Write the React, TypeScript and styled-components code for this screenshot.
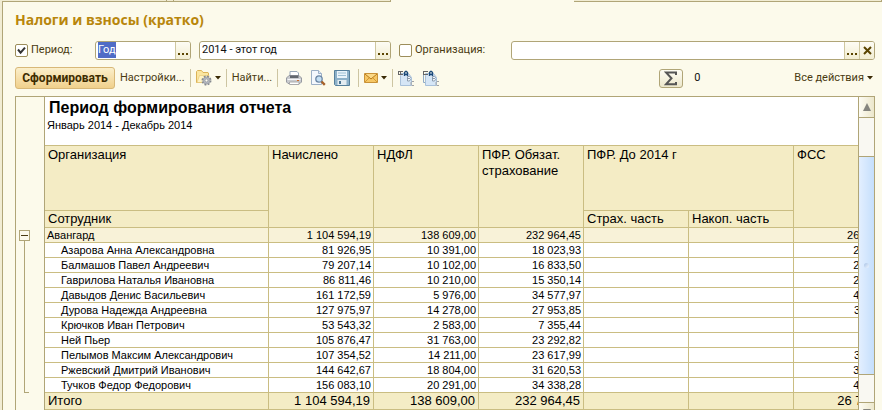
import React from "react";
import styled, { createGlobalStyle } from "styled-components";

const line = "#b0a577";
const grid = "#cabd82";
const ink = "#4a3a12";
const uiFont = `Roboto, "Liberation Sans", sans-serif`;
const sheetFont = `"Liberation Sans", Arial, sans-serif`;

const GlobalStyle = createGlobalStyle`
  * { box-sizing: border-box; }
  html, body { margin: 0; height: 100%; overflow: hidden; background: #fcfaeb; }
  button, input { font: inherit; color: inherit; margin: 0; padding: 0; }
`;

const TabEdge = styled.div`
  display: flex;
  height: 2px;
  background: #fcfaeb;
`;

const TabEdgePart = styled.div<{ $size: number; $open?: boolean }>`
  flex: ${(p) => p.$size} 1 0;
  background: ${(p) => (p.$open ? "#fcfaeb" : "#f1ecd3")};
  border-bottom: ${(p) => (p.$open ? "none" : `1px solid ${line}`)};
  border-right: ${(p) => (p.$open ? "none" : `1px solid ${line}`)};
`;

const Window = styled.main`
  min-height: 100vh;
  background: #fcfaeb;
  color: ${ink};
  font: 11px/16px ${uiFont};
  border-left: 2px solid #f1ecd3;
`;

const Body = styled.div`
  border-left: 1px solid ${line};
  padding: 9px 7px 0 12px;
`;

const Title = styled.h1`
  margin: 0 0 11px;
  color: #b8860b;
  font: bold 14px/18px "Open Sans", "Noto Sans", sans-serif;
`;

const Filters = styled.div`
  display: flex;
  align-items: center;
  height: 20px;
`;

const Check = styled.label<{ $width: number }>`
  display: flex;
  align-items: center;
  gap: 3px;
  flex: none;
  width: ${(p) => p.$width}px;
`;

const CheckBox = styled.input`
  appearance: none;
  width: 13px;
  height: 13px;
  margin: 0;
  border: 1px solid #9c8d5a;
  border-radius: 2px;
  background: #fff;
  &:checked {
    background: #fff
      url("data:image/svg+xml,%3Csvg xmlns='http://www.w3.org/2000/svg' viewBox='0 0 11 11'%3E%3Cpath d='M2 4.5 4.6 7.6 9 2.6' fill='none' stroke='%23333' stroke-width='2'/%3E%3C/svg%3E");
  }
`;

const Field = styled.div<{ $width?: number }>`
  display: flex;
  flex: ${(p) => (p.$width ? `0 0 ${p.$width}px` : "1 1 0")};
  min-width: 0;
  height: 19px;
  margin-right: 8px;
  border: 1px solid ${line};
  border-radius: 3px;
  background: #fff;
  overflow: hidden;
  color: #111;
  &:last-child { margin-right: 0; }
`;

const FieldInput = styled.input`
  flex: 1;
  min-width: 0;
  border: 0;
  outline: 0;
  padding-left: 2px;
  background: transparent;
  &::selection { background: #4f6bc6; color: #fff; }
`;

const FieldButton = styled.button`
  display: flex;
  align-items: center;
  justify-content: center;
  width: 15px;
  border: 0;
  border-left: 1px solid #cfc79f;
  background: linear-gradient(#fdfcf4, #f2edd2);
  color: #5a4400;
`;

const Toolbar = styled.div`
  display: flex;
  align-items: center;
  height: 22px;
  margin: 7px 0;
`;

const Primary = styled.button`
  height: 22px;
  width: 100px;
  border: 1px solid #d8b878;
  border-radius: 3px;
  background: linear-gradient(#fbefcb, #f0d08c);
  color: #3d2c00;
  font-weight: bold;
  font-size: 12px;
`;

const Tool = styled.button`
  display: flex;
  align-items: center;
  gap: 3px;
  border: 0;
  background: none;
  white-space: nowrap;
`;

const ToolGroup = styled.div<{ $wide?: boolean }>`
  display: flex;
  gap: 8px;
  padding: 0 ${(p) => (p.$wide ? 8 : 5)}px;
  border-right: 1px solid #cdc5a2;
  height: 18px;
  &:last-of-type { border: 0; }
`;

const Total = styled.output`
  width: 98px;
  margin-left: 11px;
  color: #111;
`;

const SumButton = styled.button`
  display: flex;
  align-items: center;
  justify-content: center;
  width: 24px;
  height: 19px;
  margin-left: auto;
  border: 1px solid ${line};
  border-radius: 3px;
  background: linear-gradient(#fdfcf4, #ece7cb);
`;

const ActionsButton = styled(Tool)`
  padding: 0 2px;
`;

const Report = styled.section`
  display: flex;
  border: 1px solid ${line};
  color: #000;
  font-family: ${sheetFont};
`;

const Gutter = styled.div`
  display: flex;
  flex-direction: column;
  align-items: center;
  flex: none;
  width: 29px;
  padding: 133px 11px 0 0;
  border-right: 1px solid ${line};
`;

const Toggle = styled.button`
  display: flex;
  align-items: center;
  justify-content: center;
  width: 11px;
  height: 11px;
  border: 1px solid ${line};
  background: #fcfaeb;
`;

const Bracket = styled.div`
  width: 5px;
  height: 152px;
  margin-left: 4px;
  border-left: 1px solid ${line};
  border-bottom: 1px solid ${line};
`;

const Sheet = styled.div`
  flex: 1;
  min-width: 0;
  overflow: hidden;
  padding-bottom: 13px;
  background: #fff;
`;

const SheetHead = styled.header`
  height: 48px;
  padding: 1px 2px 0;
`;

const SheetTitle = styled.h2`
  margin: 0;
  padding-left: 2px;
  font-size: 16px;
  line-height: 20px;
`;

const SheetPeriod = styled.p`
  margin: 0;
  font-size: 11px;
  line-height: 14px;
`;

const Table = styled.table`
  table-layout: fixed;
  width: 854px;
  border-collapse: separate;
  border-spacing: 0;
  border-top: 1px solid ${grid};
`;

const Col = styled.col<{ $width: number }>`
  width: ${(p) => p.$width}px;
`;

const HeadCell = styled.th<{ $tall?: boolean }>`
  height: ${(p) => (p.$tall ? 65 : 17)}px;
  padding: ${(p) => (p.$tall ? "1px 3px 0" : "0 3px")};
  border-right: 1px solid ${grid};
  border-bottom: 1px solid ${grid};
  background: #f4ecc5;
  font-size: 13px;
  line-height: 16px;
  font-weight: normal;
  text-align: left;
  vertical-align: top;
`;

type Kind = "group" | "item" | "total";

const Row = styled.tr<{ $kind: Kind }>`
  background: ${(p) => ({ group: "#f8f2d8", item: "#fff", total: "#f4ecc5" })[p.$kind]};
  font-size: ${(p) => (p.$kind === "total" ? 13 : 11)}px;
  line-height: ${(p) => (p.$kind === "total" ? 16 : 14)}px;
  & > * {
    padding: 0 ${(p) => (p.$kind === "total" ? 3 : 2)}px;
    border-right: 1px solid ${grid};
    border-bottom: 1px solid ${grid};
    white-space: nowrap;
  }
  & > th {
    font-weight: normal;
    text-align: left;
    padding-left: ${(p) => ({ group: 2, item: 16, total: 3 })[p.$kind]}px;
  }
  & > td { text-align: right; }
`;

const Scroll = styled.div`
  display: flex;
  flex-direction: column;
  flex: none;
  width: 16px;
  border-left: 1px solid ${line};
  background: #f9f8f2;
`;

const ScrollButton = styled.button<{ $end?: boolean }>`
  display: flex;
  align-items: center;
  justify-content: center;
  height: 21px;
  border: 0;
  border-top: ${(p) => (p.$end ? `1px solid ${line}` : "none")};
  border-bottom: ${(p) => (p.$end ? "none" : `1px solid ${line}`)};
  background: linear-gradient(90deg, #fdfcf4, #ece7cb);
`;

const Space = styled.div<{ $size: number }>`
  flex: ${(p) => p.$size} 1 0;
`;

const Thumb = styled.div`
  display: flex;
  align-items: center;
  justify-content: center;
  flex: 220 1 0;
  border: solid ${line};
  border-width: 1px 0;
  background: linear-gradient(90deg, #e3efff, #c5dffc);
`;

const Grip = styled.span`
  width: 5px;
  height: 5px;
  border-radius: 50%;
  background: linear-gradient(135deg, #a9c3e6, #eef6ff);
`;

const Dots = () => (
  <svg width="10" height="12" aria-hidden="true">
    <path d="M0 9h2v2H0zM4 9h2v2H4zM8 9h2v2H8z" fill="#5a4400" />
  </svg>
);

const Caret = () => (
  <svg width="6" height="4" aria-hidden="true">
    <path d="M0 0h6L3 3.500z" fill="#3a2a05" />
  </svg>
);

const FolderIcon = () => (
  <svg width="16" height="16" viewBox="0 0 16 16" aria-hidden="true">
    <path d="M.5 12.500v-11l1-1h4l1.500 2h5l.5.5v9.500z" fill="#fbe6a0" stroke="#dcb358" />
    <path d="M1 12.500 3.500 5.500h9.500v7z" fill="#fff3c4" stroke="#e6c571" strokeWidth=".6" />
    <circle cx="10.500" cy="10.500" r="4" fill="none" stroke="#85898f" strokeWidth="2" strokeDasharray="1.800 1.340" />
    <circle cx="10.500" cy="10.500" r="3.500" fill="#b4b8c0" stroke="#8d9198" strokeWidth=".6" />
    <circle cx="10.500" cy="10.500" r="1.400" fill="#fffdf2" stroke="#85898f" strokeWidth=".6" />
  </svg>
);

const PrinterIcon = () => (
  <svg width="16" height="16" viewBox="0 0 16 16" aria-hidden="true">
    <path d="M4 6V1.500h7L12.500 3v3z" fill="#fff" stroke="#9aa9b8" />
    <path d="M.5 8 3 5.500h10L15.500 8v4L14 13.500H2L.5 12z" fill="#c9cbcf" stroke="#9699a0" />
    <path d="M4 5.500h8.500v2.500H4z" fill="#62676e" />
    <path d="M1.500 9.500h13" stroke="#f6f6f8" />
    <path d="M3.500 12h9.500v2.500H3.500z" fill="#fff" stroke="#aaa" />
    <path d="M11 10.500h2" stroke="#d26a25" />
  </svg>
);

const PreviewIcon = () => (
  <svg width="16" height="16" viewBox="0 0 16 16" aria-hidden="true">
    <path d="M1.500.5h7l3 3v11h-10z" fill="#f4f8fd" stroke="#9db0c6" />
    <path d="M8.500.5v3h3" fill="#dce8f5" stroke="#9db0c6" />
    <circle cx="9" cy="9" r="3.200" fill="#c5e0f4" stroke="#6c87a5" strokeWidth="1.300" />
    <path d="m11.500 11.500 3.300 3.300" stroke="#a5612a" strokeWidth="2.400" />
  </svg>
);

const SaveIcon = () => (
  <svg width="16" height="16" viewBox="0 0 16 16" aria-hidden="true">
    <path d="M.5.5h15v15h-14l-1-1z" fill="#8db1c9" stroke="#56809c" />
    <path d="M3 1h10v7H3z" fill="#eaf4fa" />
    <path d="M4 3h8M4 5.500h8" stroke="#9fc0d4" />
    <path d="M3.500 10h9v5h-9z" fill="#e3ecf1" />
    <path d="M5 11h2v3H5z" fill="#4b7592" />
  </svg>
);

const MailIcon = () => (
  <svg width="14" height="16" viewBox="0 0 14 16" aria-hidden="true">
    <path d="M.5 3.500h13v9H.5z" fill="#f6c765" stroke="#c99238" />
    <path d="m1 12 4.500-4.500M13 12 8.500 7.500" stroke="#d39a35" />
    <path d="m1 4 6 5 6-5" fill="#fbd987" stroke="#b87a18" />
  </svg>
);

const SheetIcon = ({ stacked }: { stacked?: boolean }) => (
  <svg width="17" height="16" viewBox="0 0 17 16" aria-hidden="true">
    {stacked && <path d="M.5 4v8.500h2" fill="none" stroke="#8faac6" />}
    <path d="M2.500 5.500V3.500h8l3 4v8h-11z" fill="#d6e6f6" stroke="#a9c1da" />
    <path d={stacked ? "M0 1.500h5M0 4.500h5M.5 1v4" : "M0 1.500h5M0 4.500h5M.5 1v4M2.500 1v4"} stroke="#666" />
    <path d="M6.500 6V2.500l1-1h1l1 1V6M6.500 4.500h3" fill="none" stroke="#1c4a78" strokeWidth="1.300" />
    <path d="M9.500 6.500h2l1 1-1 1h-2h2l1 1-1 1.500h-2z" fill="#f2f7fc" stroke="#8494a5" strokeWidth=".9" />
    <path d="M16 11.500h-2l-1 1v2l1 1h2" fill="none" stroke="#a3a3a3" />
  </svg>
);

const SumIcon = () => (
  <svg width="14" height="15" viewBox="0 0 14 15" aria-hidden="true">
    <path d="M12 4V1.500H2L7.500 7.200 2 13.200h10V11" fill="none" stroke="#555" strokeWidth="2" />
  </svg>
);

const rows: { name: string; kind: Kind; values: string[] }[] = [
  { name: "Авангард", kind: "group", values: ["1 104 594,19", "138 609,00", "232 964,45", "26 703,84"] },
  { name: "Азарова Анна Александровна", kind: "item", values: ["81 926,95", "10 391,00", "18 023,93", "2 375,88"] },
  { name: "Балмашов Павел Андреевич", kind: "item", values: ["79 207,14", "10 102,00", "16 833,50", "2 297,01"] },
  { name: "Гаврилова Наталья Ивановна", kind: "item", values: ["86 811,46", "10 210,00", "15 350,14", "2 517,53"] },
  { name: "Давыдов Денис Васильевич", kind: "item", values: ["161 172,59", "5 976,00", "34 577,97", "4 674,01"] },
  { name: "Дурова Надежда Андреевна", kind: "item", values: ["127 975,97", "14 278,00", "27 953,85", "3 711,30"] },
  { name: "Крючков Иван Петрович", kind: "item", values: ["53 543,32", "2 583,00", "7 355,44", ""] },
  { name: "Ней Пьер", kind: "item", values: ["105 876,47", "31 763,00", "23 292,82", ""] },
  { name: "Пелымов Максим Александрович", kind: "item", values: ["107 354,52", "14 211,00", "23 617,99", "3 113,28"] },
  { name: "Ржевский Дмитрий Иванович", kind: "item", values: ["144 642,67", "18 804,00", "31 620,53", "3 488,60"] },
  { name: "Тучков Федор Федорович", kind: "item", values: ["156 083,10", "20 291,00", "34 338,28", "4 526,23"] },
  { name: "Итого", kind: "total", values: ["1 104 594,19", "138 609,00", "232 964,45", "26 703,84"] },
];

export default function App() {
  const period = React.useRef<HTMLInputElement>(null);
  React.useEffect(() => {
    period.current?.focus();
    period.current?.select();
  }, []);

  return (
    <>
      <GlobalStyle />
      <Window>
        <TabEdge>
          <TabEdgePart $size={165} />
          <TabEdgePart $size={6} />
          <TabEdgePart $size={217} />
          <TabEdgePart $size={184} $open />
          <TabEdgePart $size={308} />
        </TabEdge>
        <Body>
          <Title>Налоги и взносы (кратко)</Title>
          <Filters>
            <Check $width={80}>
              <CheckBox type="checkbox" defaultChecked />
              Период:
            </Check>
            <Field $width={96}>
              <FieldInput ref={period} aria-label="Вид периода" defaultValue="Год" />
              <FieldButton aria-label="Выбрать"><Dots /></FieldButton>
            </Field>
            <Field $width={192}>
              <FieldInput aria-label="Период" defaultValue="2014 - этот год" />
              <FieldButton aria-label="Выбрать"><Dots /></FieldButton>
            </Field>
            <Check $width={112}>
              <CheckBox type="checkbox" />
              Организация:
            </Check>
            <Field>
              <FieldInput aria-label="Организация" />
              <FieldButton aria-label="Выбрать"><Dots /></FieldButton>
              <FieldButton aria-label="Очистить">
                <svg width="9" height="9" aria-hidden="true">
                  <path d="m1 1 7 7M8 1 1 8" stroke="#5a4400" strokeWidth="2" />
                </svg>
              </FieldButton>
            </Field>
          </Filters>
          <Toolbar>
            <Primary>Сформировать</Primary>
            <ToolGroup>
              <Tool>Настройки...</Tool>
            </ToolGroup>
            <ToolGroup>
              <Tool aria-label="Варианты"><FolderIcon /><Caret /></Tool>
            </ToolGroup>
            <ToolGroup>
              <Tool>Найти...</Tool>
            </ToolGroup>
            <ToolGroup $wide>
              <Tool aria-label="Печать"><PrinterIcon /></Tool>
              <Tool aria-label="Просмотр"><PreviewIcon /></Tool>
              <Tool aria-label="Сохранить"><SaveIcon /></Tool>
            </ToolGroup>
            <ToolGroup>
              <Tool aria-label="Отправить"><MailIcon /><Caret /></Tool>
            </ToolGroup>
            <ToolGroup>
              <Tool aria-label="Развернуть группы"><SheetIcon /></Tool>
              <Tool aria-label="Свернуть группы"><SheetIcon stacked /></Tool>
            </ToolGroup>
            <SumButton aria-label="Сумма"><SumIcon /></SumButton>
            <Total>0</Total>
            <ActionsButton>Все действия <Caret /></ActionsButton>
          </Toolbar>
          <Report>
            <Gutter>
              <Toggle aria-label="Свернуть">
                <svg width="7" height="1" aria-hidden="true"><path d="M0 0h7v1H0z" fill="#4a3a12" /></svg>
              </Toggle>
              <Bracket />
            </Gutter>
            <Sheet>
              <SheetHead>
                <SheetTitle>Период формирования отчета</SheetTitle>
                <SheetPeriod>Январь 2014 - Декабрь 2014</SheetPeriod>
              </SheetHead>
              <Table>
                <colgroup>
                  <Col $width={224} />
                  {[1, 2, 3, 4, 5, 6].map((n) => <Col key={n} $width={105} />)}
                </colgroup>
                <thead>
                  <tr>
                    <HeadCell $tall>Организация</HeadCell>
                    <HeadCell $tall rowSpan={2}>Начислено</HeadCell>
                    <HeadCell $tall rowSpan={2}>НДФЛ</HeadCell>
                    <HeadCell $tall rowSpan={2}>ПФР. Обязат. страхование</HeadCell>
                    <HeadCell $tall colSpan={2}>ПФР. До 2014 г</HeadCell>
                    <HeadCell $tall rowSpan={2}>ФСС</HeadCell>
                  </tr>
                  <tr>
                    <HeadCell>Сотрудник</HeadCell>
                    <HeadCell>Страх. часть</HeadCell>
                    <HeadCell>Накоп. часть</HeadCell>
                  </tr>
                </thead>
                <tbody>
                  {rows.map(({ name, kind, values }) => (
                    <Row key={name} $kind={kind}>
                      <th scope="row">{name}</th>
                      <td>{values[0]}</td>
                      <td>{values[1]}</td>
                      <td>{values[2]}</td>
                      <td />
                      <td />
                      <td>{values[3]}</td>
                    </Row>
                  ))}
                </tbody>
              </Table>
            </Sheet>
            <Scroll>
              <ScrollButton aria-label="Вверх">
                <svg width="8" height="8" aria-hidden="true"><path d="M4 0 8 8H0z" fill="#85857f" /></svg>
              </ScrollButton>
              <Space $size={38} />
              <Thumb><Grip /></Thumb>
              <Space $size={27} />
              <ScrollButton $end aria-label="Вниз">
                <svg width="8" height="8" aria-hidden="true"><path d="M4 8 8 0H0z" fill="#85857f" /></svg>
              </ScrollButton>
            </Scroll>
          </Report>
        </Body>
      </Window>
    </>
  );
}
